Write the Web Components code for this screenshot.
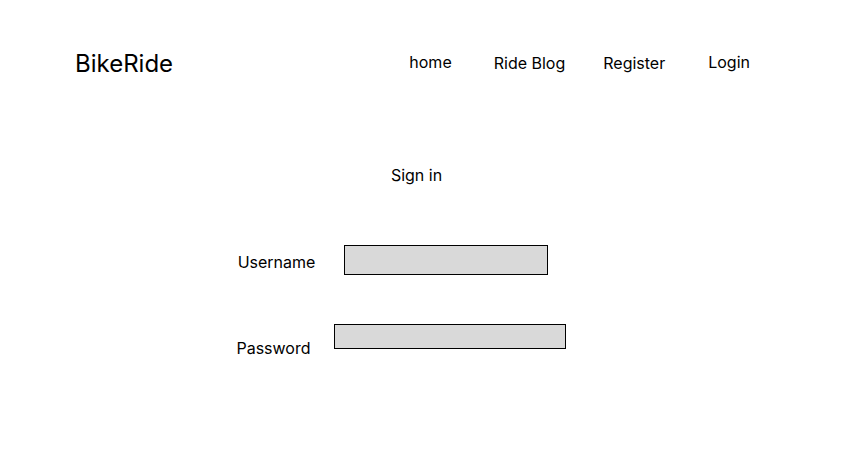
<!DOCTYPE html>
<html lang="en">
<head>
<meta charset="utf-8">
<title>BikeRide</title>
<style>
  body { margin: 0; background: #fff; color: #000; font: 16px/20px Inter, "Liberation Sans", sans-serif; }
</style>
</head>
<body>
<bike-page>
  <site-header slot="header"></site-header>
  <sign-in-form></sign-in-form>
</bike-page>
<script>
  function define(name, html) {
    customElements.define(name, class extends HTMLElement {
      constructor() {
        super();
        this.attachShadow({ mode: "open" }).innerHTML = html;
      }
    });
  }

  define("nav-link", `
    <style>
      :host { display: block; }
      a { color: inherit; text-decoration: none; white-space: nowrap; }
    </style>
    <a href="#"><slot></slot></a>`);

  define("site-header", `
    <style>
      :host { display: flex; justify-content: space-between; align-items: flex-start; padding: 49px 108px 0 75px; }
      .brand { font-size: 24px; line-height: 30px; }
      nav { display: flex; align-items: flex-start; padding-top: 3px; }
      .blog { margin: 1px 38px 0 42px; }
      .register { margin: 1px 43px 0 0; }
    </style>
    <div class="brand">BikeRide</div>
    <nav>
      <nav-link>home</nav-link>
      <nav-link class="blog">Ride Blog</nav-link>
      <nav-link class="register">Register</nav-link>
      <nav-link>Login</nav-link>
    </nav>`);

  define("sign-in-form", `
    <style>
      :host { display: block; }
      form { display: flex; flex-direction: column; align-items: center; }
      h1 { margin: 0 25px 0 0; font: inherit; }
      .row { display: flex; align-items: flex-start; }
      .username { margin: 60px 72px 0 0; gap: 29px; }
      .username label { padding-top: 7px; }
      .password { margin: 49px 56px 0 0; gap: 23px; }
      .password label { padding-top: 14px; }
      input { box-sizing: border-box; margin: 0; padding: 0 8px; border: 1px solid #000; border-radius: 0; background: #d9d9d9; font: inherit; }
      #username { width: 204px; height: 30px; }
      #password { width: 232px; height: 25px; }
    </style>
    <form>
      <h1>Sign in</h1>
      <div class="row username"><label for="username">Username</label><input id="username" type="text"></div>
      <div class="row password"><label for="password">Password</label><input id="password" type="password"></div>
    </form>`);

  define("bike-page", `
    <style>
      :host { display: block; }
      main { padding: 86px 0 48px; }
    </style>
    <slot name="header"></slot>
    <main><slot></slot></main>`);
</script>
</body>
</html>
